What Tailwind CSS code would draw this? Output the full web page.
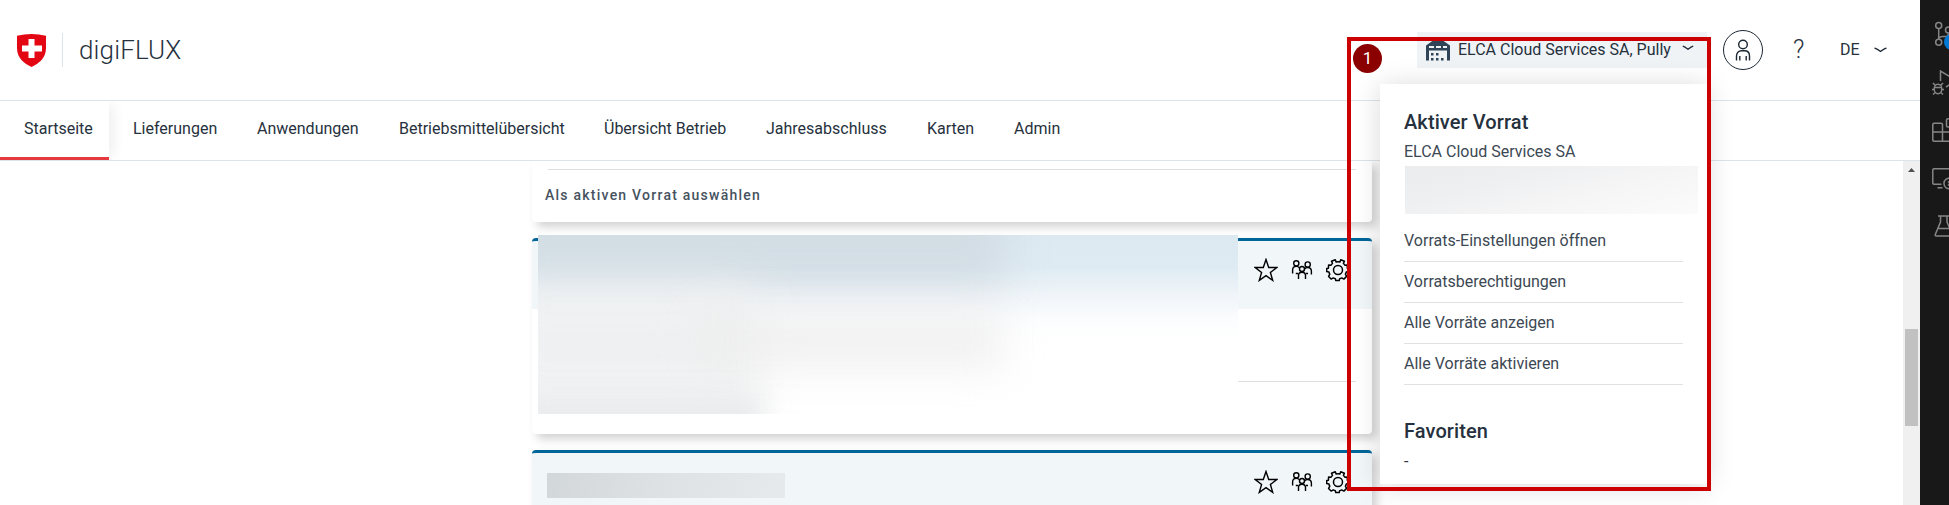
<!DOCTYPE html>
<html lang="de">
<head>
<meta charset="utf-8">
<title>digiFLUX</title>
<script src="https://cdn.jsdelivr.net/npm/@tailwindcss/browser@4"></script>
</head>
<body class="relative flex h-[505px] w-[1949px] overflow-hidden bg-white font-['Roboto',sans-serif] text-[16px] text-[#26313d]">
<svg class="hidden">
  <symbol id="star" viewBox="0 0 24 24"><path d="M12 1.500l2.700 8h8.100l-6.400 5 2.300 7.900L12 17.700l-6.700 4.700 2.300-7.900-6.400-5h8.100z" fill="none" stroke="#000" stroke-width="1.400"/></symbol>
  <symbol id="people" viewBox="0 0 24 24"><g fill="none" stroke="#000" stroke-width="1.400"><circle cx="6.300" cy="5.300" r="2.600"/><circle cx="17.700" cy="6.500" r="2.600"/><circle cx="12" cy="11" r="2.500"/><path d="M2.600 15.500v-3.500q0-3.600 3.700-3.600 2.200 0 3.200 1.600M14.400 11.200q1-1.700 3.300-1.700 3.700 0 3.700 3.800v3.200M8.500 21v-3.500q0-3.300 3.500-3.300t3.500 3.300V21M5.800 15.500h2.200M18 15.500h-2"/></g></symbol>
  <symbol id="gear" viewBox="0 0 24 24"><g fill="none" stroke="#000" stroke-width="1.500" stroke-linejoin="round"><circle cx="12" cy="12" r="4.500"/><path d="M9.300 1.700l.8 2.300q1.900-.5 3.800 0l.8-2.300 3.700 1.600-1 2.200q1 .9 1.600 1.700l2.300-.3v3.300l1.200.2v3.200l-2.200.4q-.3 1.300-.9 2.200l1.200 2.200-2.700 2.700-2.200-1.200q-.9.600-2.100.900l-.4 1.800H9.800l-.4-1.800q-1.200-.3-2.100-.9l-2.200 1.200-2.500-2.700 1.200-2.200q-.6-.9-.9-2.200l-2.200-.4v-3.200l1.700-.2.200-3.300 2.300.300q.6-.8 1.600-1.700l-1-2.200z"/></g></symbol>
</svg>

<div class="flex h-full w-[1920px] flex-col">
  <header class="flex h-[101px] shrink-0 items-center border-b border-[#dce3e9] pl-[17px]">
    <svg class="h-[33px] w-[29px]" viewBox="0 0 29 33"><path d="M0 1.700Q14.500-1.700 29 1.700V14c0 10-7 15.500-14.500 19C7 29.500 0 24 0 14z" fill="#e30613"/><path d="M11.500 5h6v6.500H25v6h-7.500V24h-6v-6.500H5v-6h6.500z" fill="#fff"/></svg>
    <div class="ml-4 h-[34px] w-px bg-[#dce3e9]"></div>
    <div class="ml-4 text-[26px] font-light tracking-[.15px]">digiFLUX</div>
    <div class="-mt-px ml-auto flex h-9 w-[290px] items-center bg-[#eff3f6] pl-[9px]">
      <svg class="mt-px h-[22px] w-6" viewBox="0 0 24 22"><path d="M0 21.500V6.500L6 2.200Q12-.8 18 2.200l6 4.300v15h-3V11.500H3v10z" fill="#2f4557"/><path d="M3 7h5v2H3zM10 7h5v2h-5zM17 7h4v2h-4z" fill="#eff3f6"/><path d="M5 14h2.500v2.500H5zM10 14h2.500v2.500H10zM5 19h2.500v2.500H5zM10 19h2.500v2.500H10zM15 19h2.500v2.500H15z" fill="#2f4557"/></svg>
      <span class="ml-2 whitespace-nowrap">ELCA Cloud Services SA, Pully</span>
      <svg class="-mt-1 ml-auto mr-[13px] h-[6px] w-3" viewBox="0 0 12 6"><path d="M.8 1.200Q2.500 1.600 6 4.300 9.500 1.600 11.200 1.200" fill="none" stroke="#1c2834" stroke-width="1.300"/></svg>
    </div>
    <div class="ml-4 flex size-[40px] items-center justify-center rounded-full border border-[#1c2834]">
      <svg class="-mt-px h-[22px] w-4" viewBox="0 0 16 22"><g fill="none" stroke="#1c2834" stroke-width="1.400"><circle cx="8" cy="5.500" r="4.300"/><path d="M1.500 21.500V17c0-3.300 2-5.200 5-5.200h3c3 0 5 1.900 5 5.200v4.500M4.800 21.500V17M11.200 21.500V17"/></g></svg>
    </div>
    <div class="ml-[30px] w-[12px] text-[25px] font-light">?</div>
    <div class="ml-[35px] w-[20px]">DE</div>
    <svg class="ml-[14px] mr-[33px] h-[6px] w-[13px]" viewBox="0 0 13 6"><path d="M.5 1.200Q2.500 1.500 6.500 4.500 10.500 1.500 12.500 1.200" fill="none" stroke="#1c2834" stroke-width="1.200"/></svg>
  </header>

  <nav class="flex h-[60px] shrink-0 border-b border-[#dce3e9] leading-[55px]">
    <div class="h-[59px] w-[109px] border-b-3 border-[#e53940] pl-6 shadow-[8px_0_12px_-4px_#00000012] [clip-path:inset(0_-20px_0_0)]">Startseite</div>
    <div class="ml-6 flex gap-[41px] whitespace-nowrap"><span class="w-[83px]">Lieferungen</span><span class="w-[101px]">Anwendungen</span><span class="w-[164px]">Betriebsmittelübersicht</span><span class="w-[121px]">Übersicht Betrieb</span><span class="w-[120px]">Jahresabschluss</span><span class="w-[46px]">Karten</span><span>Admin</span></div>
  </nav>

  <div class="flex min-h-0 flex-1">
    <main class="flex w-[1903px] flex-col gap-4 overflow-hidden pl-[532px]">
      <section class="h-[61px] w-[840px] shrink-0 rounded-b bg-white px-[10px] shadow-[5px_5px_10px_#0000002e]">
        <div class="ml-[6px] mr-[6px] mt-2 h-px bg-[#dedfe0]"></div>
        <div class="mt-[13px] pl-[3px] text-[14px] font-medium leading-6 tracking-[1.24px] text-[#46535f]">Als aktiven Vorrat auswählen</div>
      </section>
      <section class="relative h-[196px] w-[840px] shrink-0 rounded bg-white shadow-[5px_5px_10px_#0000002e]">
        <div class="flex h-[71px] items-start justify-end gap-3 rounded-t border-t-3 border-[#006699] bg-[#f1f6f9] pr-[22px] pt-[17px]">
          <svg class="size-6"><use href="#star"/></svg><svg class="size-6"><use href="#people"/></svg><svg class="size-6"><use href="#gear"/></svg>
        </div>
        <div class="mx-4 mt-[72px] h-px bg-[#dedfe0]"></div>
        <div class="absolute -top-[3px] left-[6px] h-[179px] w-[700px] overflow-hidden bg-[linear-gradient(#dce9f1_0%,#dfebf3_18%,#f0f5f9_34%,#fcfdfe_48%,#fff_60%)]">
          <div class="absolute -left-8 -top-10 h-[92px] w-[500px] bg-[#d0dae1] opacity-80 blur-[20px]"></div>
          <div class="absolute -left-10 top-[50px] h-[120px] w-[260px] bg-[#eeeff0] opacity-90 blur-[22px]"></div>
          <div class="absolute left-[160px] top-[75px] h-[60px] w-[305px] bg-[#eeeeee] opacity-80 blur-[20px]"></div>
          <div class="absolute -left-5 top-[158px] h-[50px] w-[245px] bg-[#e8eaeb] opacity-90 blur-[13px]"></div>
        </div>
      </section>
      <section class="h-[196px] w-[840px] shrink-0 rounded bg-white shadow-[5px_5px_10px_#0000002e]">
        <div class="flex h-[71px] items-start gap-3 rounded-t border-t-3 border-[#006699] bg-[#f1f6f9] pl-[15px] pr-[22px] pt-[17px]">
          <div class="mr-auto mt-[3px] h-[25px] w-[238px] bg-[linear-gradient(100deg,#d2d7da,#dde1e4_45%,#e6eaed)]"></div>
          <svg class="size-6"><use href="#star"/></svg><svg class="size-6"><use href="#people"/></svg><svg class="size-6"><use href="#gear"/></svg>
        </div>
      </section>
    </main>
    <div class="flex w-[17px] flex-col items-center bg-[#f0f0f0] pt-[7px]">
      <svg class="h-1 w-[7px]" viewBox="0 0 7 4"><path d="M0 4L3.500 0 7 4z" fill="#505050"/></svg>
      <div class="mt-[157px] h-[97px] w-[13px] bg-[#c1c1c1]"></div>
    </div>
  </div>
</div>

<aside class="h-full w-[29px] overflow-hidden bg-[#181818]">
  <svg class="h-[250px] w-[29px]" viewBox="0 0 29 250"><g fill="none" stroke="#868686" stroke-width="1.500">
    <circle cx="18.700" cy="25.500" r="3"/><circle cx="18.700" cy="42.300" r="3"/><circle cx="28.500" cy="30" r="3"/><path d="M18.700 28.500v11M19 38q1-1.500 4-1.500h3q2 0 2.500-3"/>
    <path d="M20.500 81V71l11 6.500M31 84l-5 3"/><ellipse cx="18" cy="89" rx="3.800" ry="4.700"/><path d="M14.500 87.500h7M13 83l2.500 2.500M23 83l-2.500 2.500M12 89.500h2.500M21.500 89.500H24M13 94.500l2.300-2M23 94.500l-2.300-2"/>
    <path d="M22.500 141.200H14q-1.200 0-1.200-1.200v-15.500q0-1.200 1.200-1.200h7.200q1.300 0 1.300 1.200V132h7M12.800 132h9.700v9.200H31M31 127h-3q-1.500 0-1.500-1.500V120q0-1.200 1.500-1.200h3"/>
    <path d="M31 168.800H14q-1.200 0-1.200 1.200v13q0 1.200 1.200 1.200h7.500M17.500 187.800h5M31 178.500a5.300 5.300 0 1 0 0 10M28 181.500l2 2-2 2"/>
    <path d="M18 216h12M20.500 216v6l-5.200 12.500q-.5 1.500 1 1.500H31M18.500 228.500H31M27 216v6l3 7"/></g>
    <circle cx="32" cy="42" r="8" fill="#0078d4"/></svg>
</aside>

<div class="absolute left-[1380px] top-[84px] flex h-[400px] w-[327px] flex-col bg-white px-6 pt-[22px] shadow-[0_2px_26px_#00000026]">
  <h2 class="text-[20px] font-medium leading-8 tracking-[.1px]">Aktiver Vorrat</h2>
  <div class="leading-7 text-[#3c4853]">ELCA Cloud Services SA</div>
  <div class="-mr-[15px] ml-px h-12 shrink-0 bg-[linear-gradient(165deg,#ebecee,#eeeff0_30%,#f5f5f6_60%,#fbfbfb)]"></div>
  <ul class="mt-[6px] text-[#3c4853]">
    <li class="h-[42px] border-b border-[#e0e1e2] leading-[41px]">Vorrats-Einstellungen öffnen</li>
    <li class="h-[41px] border-b border-[#e0e1e2] leading-[40px]">Vorratsberechtigungen</li>
    <li class="h-[41px] border-b border-[#e0e1e2] leading-[40px]">Alle Vorräte anzeigen</li>
    <li class="h-[41px] border-b border-[#e0e1e2] leading-[40px]">Alle Vorräte aktivieren</li>
  </ul>
  <h2 class="mt-[30px] text-[20px] font-medium leading-8 tracking-[.1px]">Favoriten</h2>
  <div class="mt-px leading-7">-</div>
</div>
<div class="absolute left-[1347px] top-[37px] h-[454px] w-[364px] border-4 border-[#cc0000]"></div>
<div class="absolute left-[1353px] top-[44px] flex size-[29px] items-center justify-center rounded-full bg-[#8b0000] text-[17px] text-white">1</div>
</body>
</html>
